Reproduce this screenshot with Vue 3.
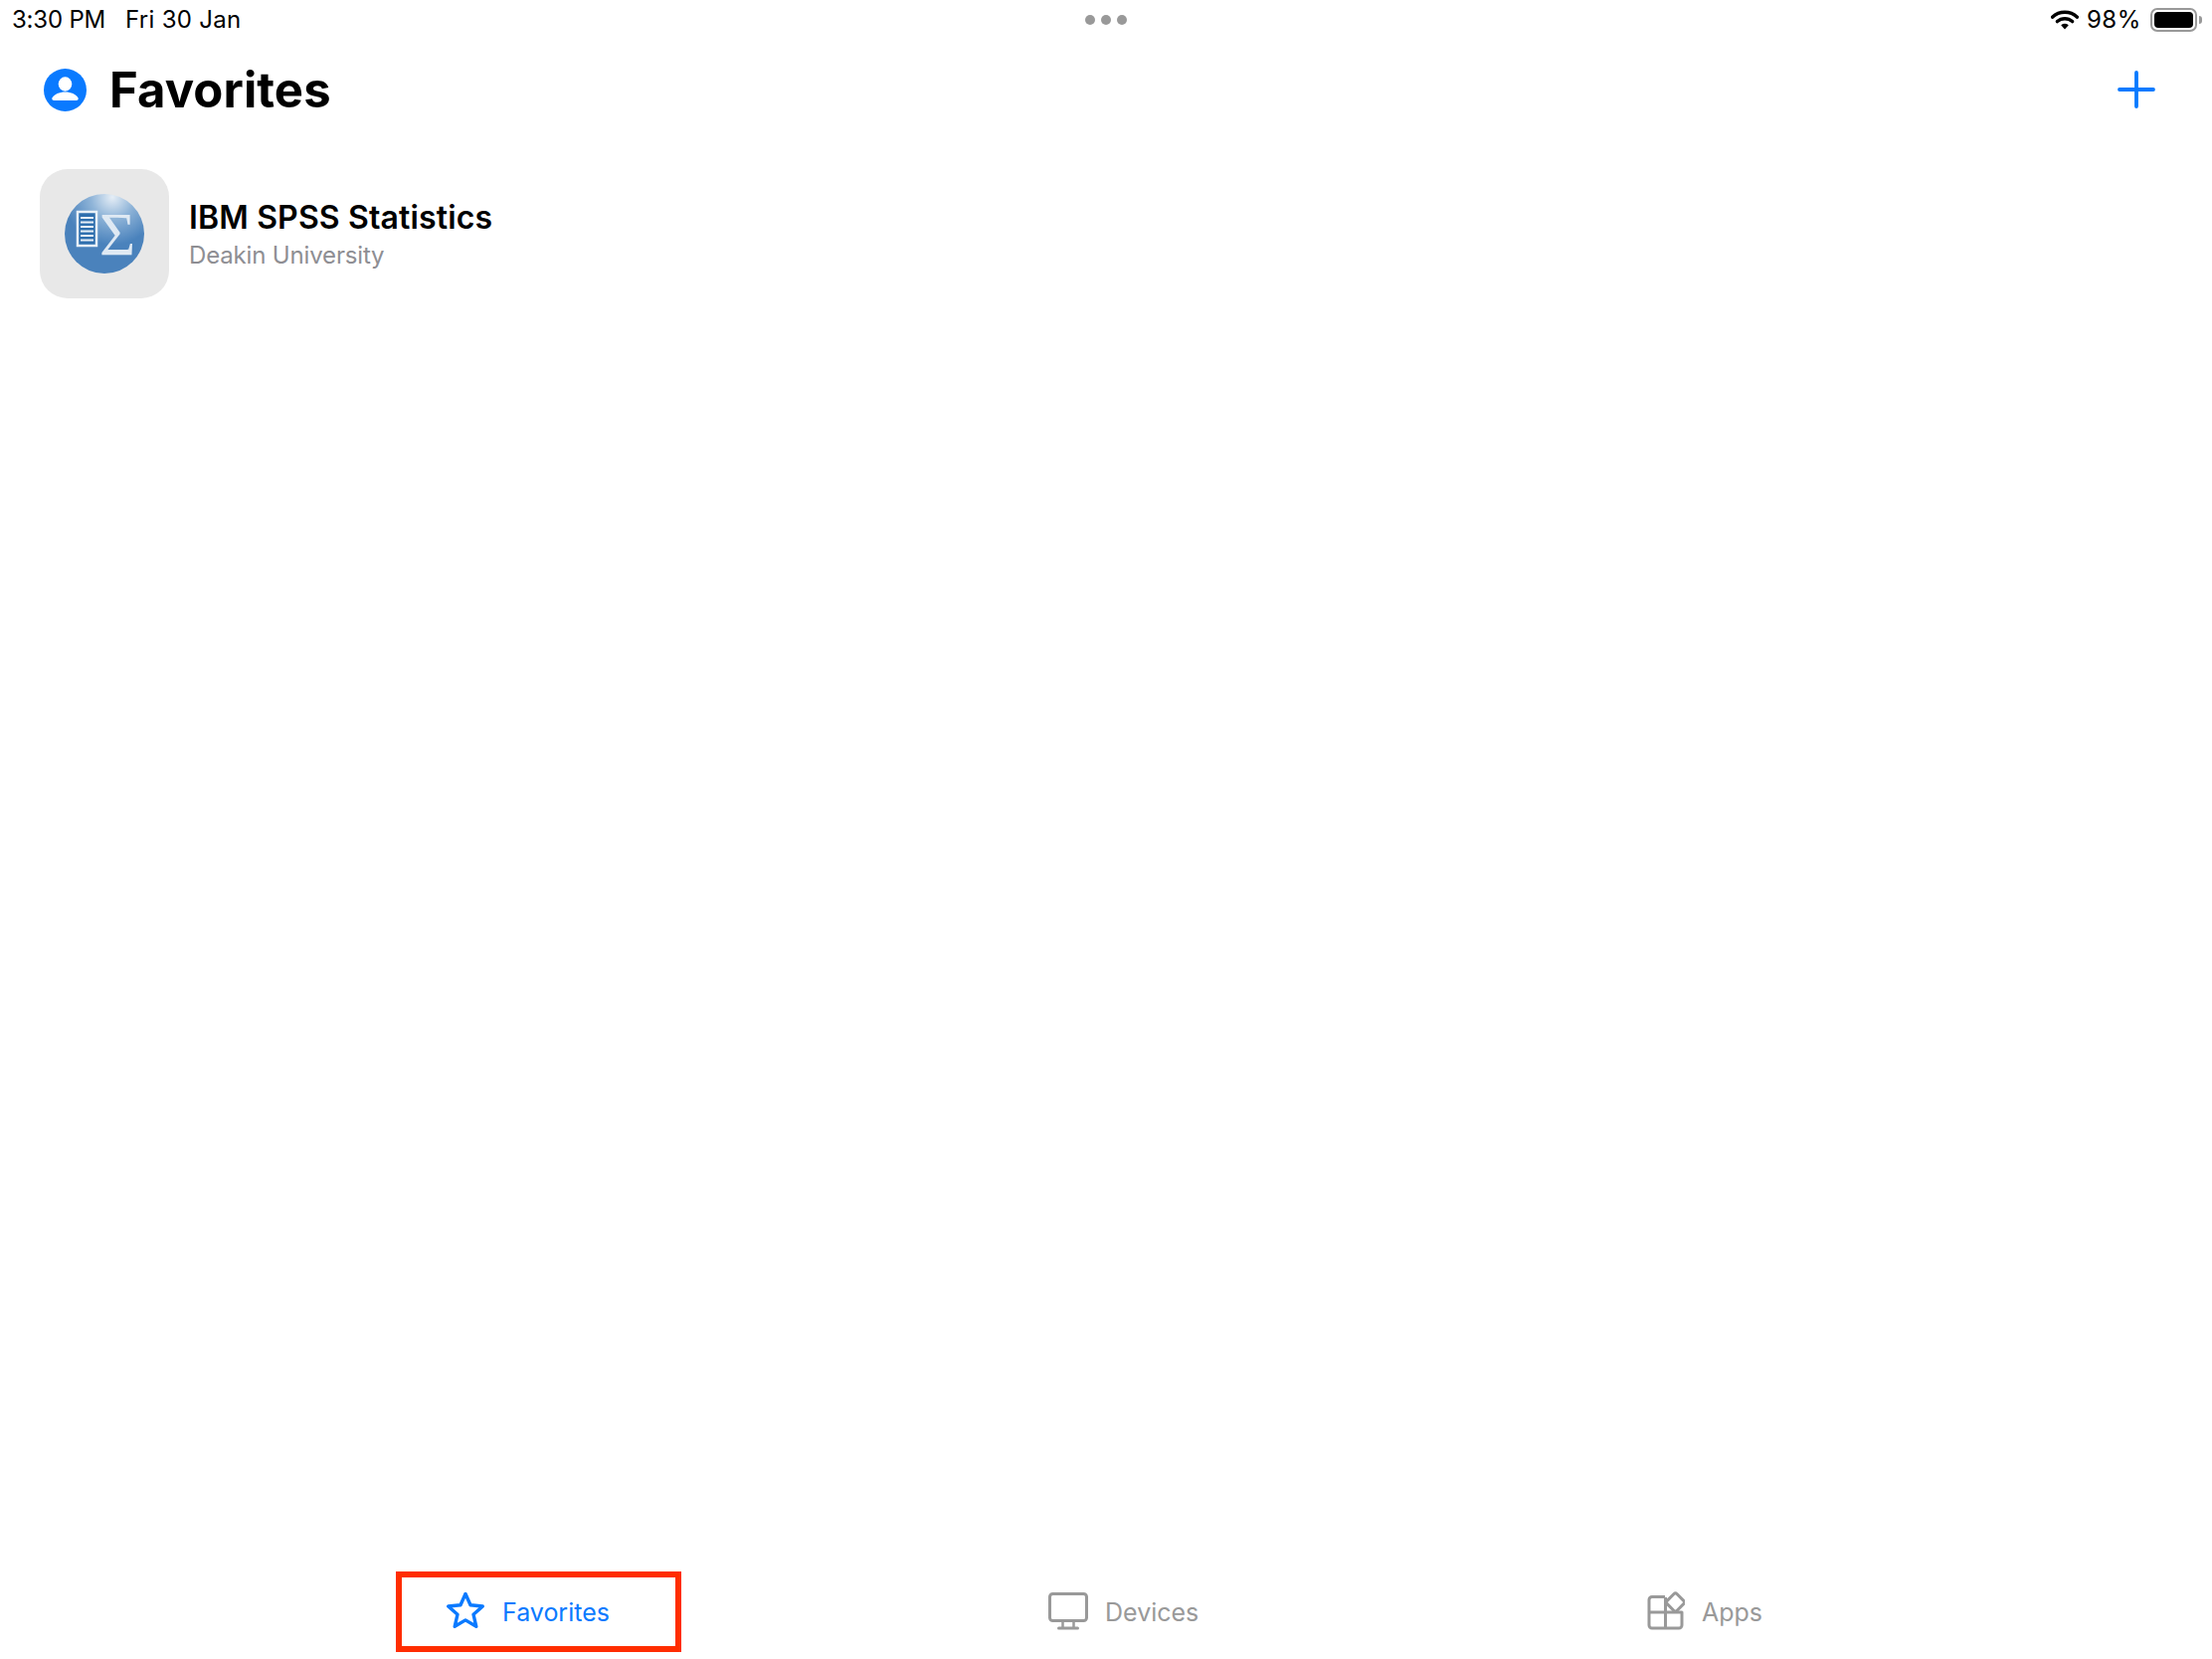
<script setup>
const tabs = [
  { key: 'favorites', label: 'Favorites', active: true },
  { key: 'devices', label: 'Devices', active: false },
  { key: 'apps', label: 'Apps', active: false },
]
</script>

<template>
  <div class="screen">
    <header class="status">
      <div class="status-left">
        <span class="time">3:30 PM</span>
        <span class="date">Fri 30 Jan</span>
      </div>
      <div class="dots"><i></i><i></i><i></i></div>
      <div class="status-right">
        <svg class="wifi" width="28" height="20" viewBox="0 0 28 20">
          <path d="M1.5 7.2C8.6.6 19.4.6 26.5 7.2" fill="none" stroke="#000" stroke-width="3.4" stroke-linecap="round"/>
          <path d="M6.4 11.6c4.4-3.9 10.8-3.9 15.2 0" fill="none" stroke="#000" stroke-width="3.4" stroke-linecap="round"/>
          <path d="M10.2 15.2c2.3-1.9 5.3-1.9 7.6 0L14 19.6z" fill="#000"/>
        </svg>
        <span class="pct">98%</span>
        <div class="battery"><div class="battery-fill"></div></div>
        <div class="battery-nub"></div>
      </div>
    </header>

    <section class="title-row">
      <svg class="avatar" width="43" height="43" viewBox="0 0 43 43">
        <circle cx="21.5" cy="21.5" r="21.5" fill="#0a7aff"/>
        <ellipse cx="21.5" cy="15.500" rx="6.800" ry="7.200" fill="#fff"/>
        <path d="M10.500 32c-1.900 0-2.700-1.200-1.900-2.800 1.900-3.600 7-5.800 12.900-5.800s11 2.200 12.900 5.800c.8 1.600 0 2.800-1.900 2.800z" fill="#fff"/>
      </svg>
      <h1>Favorites</h1>
      <svg class="plus" width="38" height="38" viewBox="0 0 38 38">
        <path d="M19 2v34M2 19h34" stroke="#0a7aff" stroke-width="3.800" stroke-linecap="round"/>
      </svg>
    </section>

    <main class="list">
      <article class="app-row">
        <div class="tile">
          <svg class="logo" width="80" height="80" viewBox="0 0 80 80">
            <defs>
              <radialGradient id="sheen" cx="0.6" cy="0.04" r="0.6">
                <stop offset="0" stop-color="#e6eef6"/>
                <stop offset="0.45" stop-color="#8fb4d8"/>
                <stop offset="1" stop-color="#4a82bc"/>
              </radialGradient>
            </defs>
            <circle cx="40" cy="40" r="40" fill="url(#sheen)"/>
            <rect x="13" y="18" width="19" height="34" fill="#2f6fae" stroke="#e8f0f7" stroke-width="2.500"/>
            <path d="M16 24h13M16 28.500h13M16 33h13M16 37.500h13M16 42h13M16 46.500h13" stroke="#e8f0f7" stroke-width="2"/>
            <text class="sigma" x="53" y="61" text-anchor="middle">Σ</text>
          </svg>
        </div>
        <div class="app-text">
          <div class="app-name">IBM SPSS Statistics</div>
          <div class="app-org">Deakin University</div>
        </div>
      </article>
    </main>

    <nav class="tabbar">
      <div v-for="t in tabs" :key="t.key" class="tab" :class="[t.key, { active: t.active }]">
        <svg v-if="t.key === 'favorites'" class="tab-icon" width="40" height="38" viewBox="0 1 40 38">
          <path d="M20 2.500l5 11.300 12.300 1.200-9.300 8.200 2.800 12.100L20 28.900 9.200 35.300 12 23.200 2.700 15l12.300-1.200z" fill="none" stroke="#0a7aff" stroke-width="3.400" stroke-linejoin="round"/>
        </svg>
        <svg v-else-if="t.key === 'devices'" class="tab-icon" width="40" height="38" viewBox="0 0 40 38">
          <rect x="1.500" y="1.500" width="37" height="27" rx="3" fill="none" stroke="#999" stroke-width="3"/>
          <path d="M14.500 29v7M25.500 29v7" stroke="#999" stroke-width="2.500"/>
          <path d="M10.500 36h19" stroke="#999" stroke-width="3" stroke-linecap="round"/>
        </svg>
        <svg v-else class="tab-icon" width="38" height="40" viewBox="0 1 38 40">
          <path d="M18 6.500H5a3 3 0 0 0-3 3V35a3 3 0 0 0 3 3h27a3 3 0 0 0 3-3V22H2M18.500 7v31" fill="none" stroke="#999" stroke-width="3" stroke-linejoin="round"/>
          <rect x="21.500" y="5" width="14" height="14" rx="2" transform="rotate(45 28.500 12)" fill="#fff" stroke="#999" stroke-width="3"/>
        </svg>
        <span class="tab-label">{{ t.label }}</span>
        <div v-if="t.active" class="callout"></div>
      </div>
    </nav>
  </div>
</template>

<style>
html, body { margin: 0; background: #fff; }
</style>

<style scoped>
.screen {
  width: 2224px;
  height: 1668px;
  display: flex;
  flex-direction: column;
  overflow: hidden;
  background: #fff;
  color: #000;
  font-family: Inter, "Liberation Sans", sans-serif;
}
.status {
  height: 40px;
  flex: none;
  display: grid;
  grid-template-columns: 1fr auto 1fr;
  align-items: center;
  padding: 0 10px 0 12px;
  font-size: 24px;
  line-height: 40px;
}
.status-left { display: flex; gap: 20px; }
.time { letter-spacing: -0.2px; }
.date { letter-spacing: 0.3px; }
.dots { display: flex; gap: 6px; margin-right: 3px; }
.dots i { width: 10px; height: 10px; border-radius: 50%; background: #999; }
.status-right { display: flex; align-items: center; justify-content: flex-end; }
.wifi { margin-right: 8px; }
.pct { margin-right: 9px; letter-spacing: 0.6px; }
.battery {
  width: 47px;
  height: 24px;
  box-sizing: border-box;
  border: 2px solid #999;
  border-radius: 7px;
  padding: 2px;
}
.battery-fill { width: 100%; height: 100%; background: #000; border-radius: 4px; }
.battery-nub { width: 3px; height: 8px; margin-left: 2px; background: #999; border-radius: 0 3px 3px 0; }
.title-row {
  height: 100px;
  flex: none;
  display: flex;
  align-items: center;
  padding: 0 57px 0 44px;
  box-sizing: border-box;
}
.title-row h1 { margin: 2px 0 0 23px; font-size: 49px; line-height: 58px; font-weight: 700; flex: 1; letter-spacing: 0.1px; }
.list { flex: 1; padding: 30px 40px 0; }
.app-row { display: flex; align-items: center; gap: 20px; }
.tile {
  width: 130px;
  height: 130px;
  border-radius: 28px;
  background: #e8e8e8;
  display: flex;
  align-items: center;
  justify-content: center;
}
.logo { filter: blur(0.5px); }
.sigma { font-family: "Liberation Serif", serif; font-size: 62px; fill: #dfe9f3; }
.app-text { padding-top: 2px; }
.app-name { font-size: 32px; line-height: 40px; font-weight: 600; letter-spacing: 0.15px; }
.app-org { font-size: 24px; line-height: 32px; margin-top: 2px; color: #8e8e93; letter-spacing: -0.16px; }
.tabbar {
  height: 88px;
  flex: none;
  box-sizing: border-box;
  padding-left: 448px;
  display: grid;
  grid-template-columns: 606px 602px auto;
  align-items: center;
  padding-bottom: 8px;
}
.tab { position: relative; display: flex; align-items: center; color: #999; font-size: 25px; line-height: 32px; }
.tab.active { color: #0a7aff; }
.tab-icon { margin-right: 17px; }
.tab-label { padding-top: 2px; }
.callout {
  position: absolute;
  left: -50px;
  top: -21px;
  width: 287px;
  height: 81px;
  box-sizing: border-box;
  border: 6px solid #ff2d00;
}
</style>
